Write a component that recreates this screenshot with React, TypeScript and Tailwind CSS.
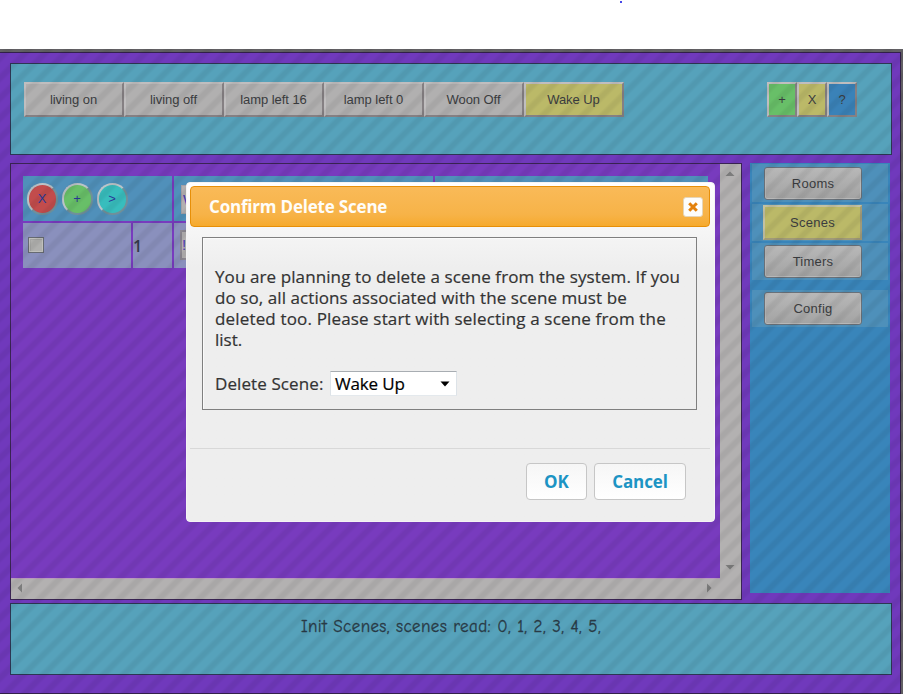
import { ReactNode } from 'react';

const scenes = ['living on', 'living off', 'lamp left 16', 'lamp left 0', 'Woon Off'];
const face =
  "flex items-center justify-center border-2 border-t-[#c0bebf] border-l-[#c0bebf] border-r-[#858083] border-b-[#858083] text-[#3b3d40]";

function SceneButton({ label, active = false }: { label: string; active?: boolean }) {
  return (
    <button className={`${face} h-[35px] w-[100px] pr-px text-[13px] tracking-[-0.05px] ${active ? 'bg-[#bbb968]' : 'bg-[#b1b0b0]'}`}>
      {label}
    </button>
  );
}

function MenuButton({ label, active = false }: { label: string; active?: boolean }) {
  return (
    <button
      className={`flex items-center justify-center text-[13px] tracking-[0.25px] text-[#3b3d40] ${
        active
          ? 'h-[35px] w-[99px] border-2 border-t-[#c4c1a2] border-l-[#c4c1a2] border-r-[#a09a78] border-b-[#a09a78] bg-[#bbb968]'
          : 'h-[33px] w-[98px] rounded-[3px] border border-[#68717a] bg-linear-to-b from-[#b8b8b8] to-[#a3a3a3] shadow-[inset_0_0_0_1px_#b8b8b8]'
      }`}
    >
      {label}
    </button>
  );
}

function RoundButton({ color, children }: { color: string; children: ReactNode }) {
  return (
    <button
      className={`flex h-8 w-[31px] items-center justify-center rounded-full border-2 border-t-[#bcc4c8] border-l-[#bcc4c8] border-r-[#70909a] border-b-[#70909a] pr-px text-[13px] text-[#2a3a98] ${color}`}
    >
      {children}
    </button>
  );
}

function Arrow({ d, className = '' }: { d: string; className?: string }) {
  return (
    <svg width="10" height="10" viewBox="0 0 10 10" className={className}>
      <path d={d} fill="#7c7c7c" />
    </svg>
  );
}

function Header() {
  return (
    <header className="flex h-[92px] items-start border border-[#2d3654] bg-[#56a2bb] pt-[18px] pl-[13px]">
      <div className="flex w-[743px]">
        {scenes.map((s) => (
          <SceneButton key={s} label={s} />
        ))}
        <SceneButton label="Wake Up" active />
      </div>
      <div className="flex">
        <button className={`${face} h-[35px] w-[30px] bg-[#68bf68] text-[13px]`}>+</button>
        <button className={`${face} h-[35px] w-[30px] bg-[#bbb968] text-[13px]`}>X</button>
        <button className={`${face} h-[35px] w-[30px] border-r-[#6a8099] border-b-[#6a8099] bg-[#3a82b8] text-[13px]`}>?</button>
      </div>
    </header>
  );
}

function SceneTable() {
  return (
    <div className="flex h-[92px] w-[685px] flex-col gap-[2px]">
      <div className="flex h-[45px] gap-[2px]">
        <div className="flex w-[149px] items-center gap-1 bg-[#5090ba] pl-1">
          <RoundButton color="bg-[#c24c4c]">X</RoundButton>
          <RoundButton color="bg-[#68bf68]">+</RoundButton>
          <RoundButton color="bg-[#38bdbd]">&gt;</RoundButton>
        </div>
        <div className="w-[259px] bg-[#5090ba] pt-[9px] pl-[7px]">
          <div className="h-[29px] w-[100px] border border-[#a3a0a6] bg-[#b3b0b0] pl-px text-[15px] leading-[27px] text-[#4c3ab0]">W</div>
        </div>
        <div className="grow bg-[#5090ba]" />
      </div>
      <div className="flex h-[45px] gap-[2px]">
        <div className="w-[108px] bg-[#8a90bd] pt-[14px] pl-[5px]">
          <div className="h-4 w-4 border border-[#666a72] bg-[#b0b0ae] shadow-[inset_0_0_0_1px_#c0c0bc,inset_2px_2px_0_0_#a4a4a2]" />
        </div>
        <div className="flex w-[39px] items-center bg-[#8a90bd] font-['Open_Sans',sans-serif] text-[16px] font-semibold text-[#333a4a]">1</div>
        <div className="grow bg-[#8a90bd] pt-[7px] pl-[6px]">
          <div className="h-[30px] w-[100px] border-2 border-[#8b8790] bg-[#b3b0b0] text-[15px] leading-[26px] text-[#4c3ab0]">!</div>
        </div>
      </div>
    </div>
  );
}

function ScenePanel() {
  return (
    <section className="flex h-[437px] w-[732px] flex-col border border-[#3a2454] bg-[#b3b1b1]">
      <div className="flex h-[414px]">
        <div className="w-[709px] bg-[#783bbe] pt-3 pl-3">
          <SceneTable />
        </div>
        <div className="flex grow flex-col items-center justify-between pt-[5px] pr-px pb-[6px]">
          <Arrow d="M0.5 7 5 2.5 9.5 7Z" />
          <Arrow d="M0.5 3 9.5 3 5 7.5Z" />
        </div>
      </div>
      <div className="flex h-[21px] w-[709px] items-center justify-between border-t border-[#ba9cbd] pr-[6px] pb-[2px] pl-1">
        <Arrow d="M7 0.5 7 9.5 2.5 5Z" />
        <Arrow d="M3 0.5 3 9.5 7.5 5Z" />
      </div>
    </section>
  );
}

function Sidebar() {
  return (
    <nav className="flex h-[430px] w-[140px] flex-col bg-[#3985ba] pt-px">
      <div className="mx-0.5 flex h-[38px] bg-[#4e90ba] pt-[3px] pl-3"><MenuButton label="Rooms" /></div>
      <div className="mx-0.5 mt-0.5 flex h-[37px] items-center bg-[#4e90ba] pl-[11px]"><MenuButton label="Scenes" active /></div>
      <div className="mx-0.5 mt-0.5 flex h-[37px] bg-[#4e90ba] pt-[2px] pl-3"><MenuButton label="Timers" /></div>
      <div className="mx-0.5 mt-[10px] flex h-[37px] bg-[#4e90ba] pt-[2px] pl-3"><MenuButton label="Config" /></div>
    </nav>
  );
}

function DeleteDialog() {
  return (
    <div className="absolute top-[182px] left-[186px] flex h-[340px] w-[529px] flex-col rounded-[4px] border border-[#f4f4f4] bg-[#eee] bg-linear-to-b from-white via-[#eee] via-25% to-[#eee] py-[3px] pr-1 pl-[3px] font-['Open_Sans',sans-serif] text-[#333]">
      <div className="flex h-[41px] shrink-0 items-center justify-between rounded-[4px] border border-[#e78f08] bg-linear-to-b from-[#f9ba58] via-[#f7b348] via-70% to-[#f6aa2c] pr-[6px] pl-[18px]">
        <h2 className="mt-px text-[17px] font-bold tracking-[-0.2px] text-[#fffdf8]">Confirm Delete Scene</h2>
        <button className="mt-px flex h-5 w-5 items-center justify-center rounded-[3px] border border-[#e5d5b8] bg-[#fdfdfb]">
          <svg width="10" height="10" viewBox="0 0 10 10"><path d="M1.2 1.2 8.8 8.8M8.8 1.2 1.2 8.8" stroke="#e3810b" strokeWidth="3" /></svg>
        </button>
      </div>
      <div className="mt-[10px] ml-3 h-[173px] w-[495px] shrink-0 border border-[#7f7f7f] pt-[28px] pl-[12px] shadow-[inset_1px_1px_0_#fafafa]">
        <div className="text-[17px] leading-[21px] whitespace-nowrap [-webkit-text-stroke:0.2px_#333]">
          <div className="tracking-[0.1px]">You are planning to delete a scene from the system. If you</div>
          <div className="tracking-[0.08px]">do so, all actions associated with the scene must be</div>
          <div className="tracking-[0.16px]">deleted too. Please start with selecting a scene from the</div>
          <div>list.</div>
        </div>
        <div className="mt-[21px] flex items-center text-[17px]">
          <label className="w-[115px] tracking-[0.1px] whitespace-nowrap [-webkit-text-stroke:0.2px_#333]">Delete Scene:</label>
          <div className="flex h-[25px] w-[127px] items-center justify-between border border-t-[#a8adb2] border-r-[#dde3e8] border-b-[#e4e9ed] border-l-[#dde3e8] bg-white pr-[6px] pl-1 text-black">
            <span className="tracking-[-0.15px] [-webkit-text-stroke:0.2px_#000]">Wake Up</span>
            <svg width="10" height="6" viewBox="0 0 10 6"><path d="M0.5 0.5H9.5L5 5.5Z" fill="#000" /></svg>
          </div>
        </div>
      </div>
      <div className="mt-[38px] flex grow justify-end gap-[7px] border-t border-[#d8d8d8] pt-[14px] pr-[24px]">
        <button className="h-[37px] w-[61px] rounded-[4px] border border-[#c6c6c6] bg-linear-to-b from-[#f6f6f6] to-white text-[17px] font-bold text-[#1c94c4]">OK</button>
        <button className="h-[37px] w-[92px] rounded-[4px] border border-[#c6c6c6] bg-linear-to-b from-[#f6f6f6] to-white text-[17px] font-bold tracking-[-0.1px] text-[#1c94c4]">Cancel</button>
      </div>
    </div>
  );
}

export default function App() {
  return (
    <div className="relative flex h-[694px] w-[903px] flex-col overflow-hidden bg-white font-['Liberation_Sans',Arial,sans-serif]">
      <div className="h-[49px] pl-[619px]">
        <div className="h-1 w-1 pt-px pl-[1px]"><div className="h-[2px] w-[2px] bg-[#4848e8]" /></div>
      </div>
      <main className="relative h-[645px] bg-[#626064] pt-[3px] pr-[2px]">
        <div className="flex h-[642px] flex-col border-t border-r border-b border-[#33204c] bg-[#7039bc] pt-[10px] pr-[8px] pl-[10px]">
          <Header />
          <div className="mt-2 flex h-[440px] gap-2">
            <ScenePanel />
            <Sidebar />
          </div>
          <footer className="h-[72px] border border-[#2d3654] bg-[#56a2bb] pt-[10px] text-center">
            <span className="font-['Comic_Sans_MS','Comic_Neue',cursive] text-[17px] font-medium tracking-[0.4px] text-[#293a46] [-webkit-text-stroke:0.3px_#293a46]">
              Init Scenes, scenes read: 0, 1, 2, 3, 4, 5,
            </span>
          </footer>
        </div>
        <div className="pointer-events-none absolute inset-0 bg-[repeating-linear-gradient(135deg,transparent_0px,transparent_2px,rgba(0,0,0,0.06)_5px,rgba(0,0,0,0.06)_8px,transparent_11px,transparent_14.142px)]" />
      </main>
      <DeleteDialog />
    </div>
  );
}
